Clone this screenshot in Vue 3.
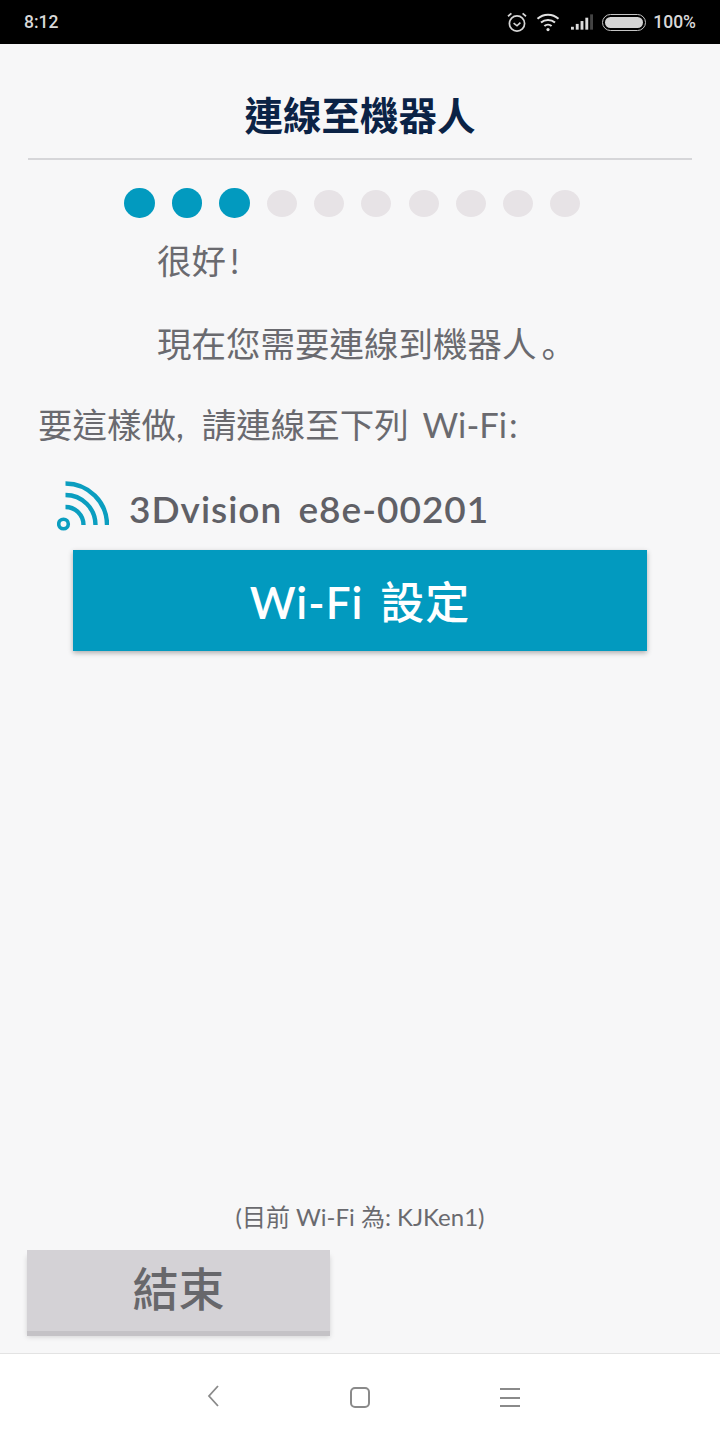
<template>
  <main class="pantalla">

    <!-- STATUS BAR -->
    <header class="estado">
      <span class="estado__hora">8:12</span>
      <div class="estado__iconos">
        <svg class="ic-alarma" viewBox="0 0 22 22" width="22" height="22" fill="none" stroke="#d6d6d6">
          <circle cx="11" cy="12.5" r="7.6" stroke-width="1.7" />
          <path d="M7.6 12.2l3.4 2.6 3.4-3.2" stroke-width="1.6" />
          <path d="M2 5.2l3.4-2.8M20 5.2l-3.4-2.8" stroke-width="1.8" />
        </svg>
        <svg class="ic-wifi" viewBox="0 0 24 20" width="24" height="20" fill="none" stroke="#e2e2e2" stroke-width="2">
          <path d="M1.5 6.8c6-5.4 15-5.4 21 0" />
          <path d="M5 10.6c4-3.6 10-3.6 14 0" />
          <path d="M8.4 14c2-1.8 5.2-1.8 7.2 0" />
          <circle cx="12" cy="17.6" r="1.6" fill="#e2e2e2" stroke="none" />
        </svg>
        <svg class="ic-senal" viewBox="0 0 23 16" width="22" height="16">
          <rect x="0" y="13" width="3" height="3" fill="#dcdcdc" />
          <rect x="5" y="10" width="3" height="6" fill="#dcdcdc" />
          <rect x="10" y="7" width="3" height="9" fill="#dcdcdc" />
          <rect x="15" y="3.5" width="3" height="12.5" fill="#dcdcdc" />
          <rect x="20" y="0" width="3" height="16" fill="#444" />
        </svg>
        <div class="bateria"><div class="bateria__carga"></div></div>
        <span class="estado__pct">100%</span>
      </div>
    </header>

    <!-- CONTEUDO -->
    <section class="conteudo">
      <h1 class="titulo">連線至機器人</h1>
      <div class="linha"></div>

      <div class="pontos">
        <span
          v-for="n in 10"
          :key="n"
          class="ponto"
          :class="{ 'ponto--ativo': n <= 3 }"
        ></span>
      </div>

      <p class="texto texto--recuo primeiro">很好<span class="sinal">!</span></p>
      <p class="texto texto--recuo segundo">現在您需要連線到機器人<span class="ponto-final">。</span></p>
      <p class="texto terceiro">要這樣做<span class="virgula">,</span> 請連線至下列 Wi-Fi<span class="dois-pontos">:</span></p>

      <div class="rede">
        <svg viewBox="0 0 52 52" width="52" height="52" fill="none" stroke="#0b9ec0" stroke-width="4.400">
          <circle cx="6.500" cy="43" r="4.800" stroke-width="3.600" />
          <path d="M8.500 2.500A41.500 41.500 0 0 1 50 44" />
          <path d="M8.500 14A30 30 0 0 1 38.500 44" />
          <path d="M8.500 26A18 18 0 0 1 26.500 44" />
        </svg>
        <span class="rede__nome">3Dvision e8e-00201</span>
      </div>

      <button class="btn btn--wifi" type="button">Wi-Fi <span class="btn__cjk">設定</span></button>

      <p class="atual">(目前 Wi-Fi 為: KJKen1)</p>
      <button class="btn btn--fim" type="button">結束</button>
    </section>

    <!-- NAV -->
    <footer class="nav">
      <svg viewBox="0 0 16 24" width="16" height="24" fill="none" stroke="#8a8a8a" stroke-width="1.800">
        <path d="M13 2L4 12l9 10" />
      </svg>
      <div class="nav__casa"></div>
      <div class="nav__menu"><i></i><i></i><i></i></div>
    </footer>

  </main>
</template>

<script setup>
</script>

<style>
html, body {
  margin: 0;
  background: #f7f7f8;
}
</style>

<style scoped>
.pantalla {
  width: 720px;
  height: 1440px;
  display: flex;
  flex-direction: column;
  background: #f7f7f8;
  font-family: Lato, "Noto Sans CJK TC", sans-serif;
  overflow: hidden;
}

/* STATUS BAR */
.estado {
  height: 44px;
  flex: none;
  background: #000;
  display: flex;
  align-items: center;
  justify-content: space-between;
  padding: 0 24px;
  font-family: Roboto, sans-serif;
  color: #d8d8d8;
  font-size: 17.500px;
  font-weight: 500;
}

.estado__iconos {
  display: flex;
  align-items: center;
}

.ic-wifi {
  margin-left: 8px;
}

.ic-senal {
  margin-left: 11px;
}

.bateria {
  width: 44px;
  height: 17px;
  margin-left: 9px;
  padding: 2px;
  box-sizing: border-box;
  border: 1.500px solid #c4c4c4;
  border-radius: 9px;
}

.bateria__carga {
  height: 100%;
  border-radius: 6px;
  background: #d4d4d4;
}

.estado__pct {
  margin-left: 7px;
}

/* CONTEUDO */
.conteudo {
  flex: 1;
  display: flex;
  flex-direction: column;
  align-items: flex-start;
  padding: 0 28px;
}

.titulo {
  align-self: stretch;
  margin: 48px 0 0;
  text-align: center;
  font-size: 38.500px;
  line-height: 46px;
  font-weight: 700;
  color: #0b2346;
}

.linha {
  align-self: stretch;
  height: 2px;
  margin-top: 20px;
  background: #d6d6d9;
}

.pontos {
  display: flex;
  align-items: center;
  gap: 17.200px;
  margin: 28px 0 0 96px;
  height: 30px;
}

.ponto {
  width: 30px;
  height: 27px;
  border-radius: 50%;
  background: #e7e3e6;
}

.ponto--ativo {
  width: 30.500px;
  height: 30px;
  background: #029abf;
}

.texto {
  margin: 0 0 0 10px;
  font-size: 34.500px;
  line-height: 44px;
  color: #6a6a6f;
  white-space: nowrap;
  word-spacing: 5px;
}

.texto--recuo {
  margin-left: 129px;
}

.primeiro {
  margin-top: 21px;
}

.segundo {
  margin-top: 39px;
}

.terceiro {
  margin-top: 37px;
}

.sinal {
  margin-left: 4px;
}

.dois-pontos {
  margin-left: 2px;
}

.virgula {
  letter-spacing: 4px;
}

.ponto-final {
  font-family: "Noto Sans CJK SC", sans-serif;
  line-height: 0;
  margin-left: 5px;
}

.rede {
  display: flex;
  align-items: center;
  margin: 34px 0 0 29px;
  height: 52px;
}

.rede__nome {
  margin-left: 20px;
  padding-top: 2px;
  font-size: 37px;
  font-weight: 600;
  letter-spacing: 1px;
  word-spacing: 6px;
  color: #606066;
  white-space: nowrap;
}

.btn {
  border: none;
  padding: 0;
  font-family: inherit;
}

.btn--wifi {
  width: 574px;
  height: 101px;
  margin: 17px 0 0 45px;
  padding-bottom: 2px;
  background: #029abf;
  color: #fff;
  font-size: 44px;
  font-weight: 600;
  letter-spacing: 1px;
  word-spacing: 5px;
  box-shadow: 0 2px 5px rgba(0, 0, 0, 0.3);
}

.btn__cjk {
  font-weight: 500;
}

.atual {
  align-self: stretch;
  margin: auto 0 0;
  text-align: center;
  font-size: 24px;
  line-height: 32px;
  color: #6a6a6f;
}

.btn--fim {
  width: 303px;
  height: 81px;
  margin: 17px 0 22px -1px;
  padding-bottom: 9px;
  background: #d4d2d6;
  color: #67676b;
  font-size: 46px;
  font-weight: 500;
  box-shadow: 0 5px 0 #c4c2c6, 0 6px 5px rgba(0, 0, 0, 0.15);
}

/* NAV */
.nav {
  height: 86px;
  flex: none;
  background: #fff;
  border-top: 1px solid #e3e3e3;
  display: flex;
  align-items: center;
  justify-content: center;
  position: relative;
}

.nav svg {
  position: absolute;
  left: 205px;
  top: 30px;
}

.nav__casa {
  width: 16px;
  height: 17px;
  border: 2px solid #8a8a8a;
  border-radius: 5px;
}

.nav__menu {
  position: absolute;
  left: 500px;
  top: 34px;
  width: 20px;
  height: 19px;
  display: flex;
  flex-direction: column;
  justify-content: space-between;
}

.nav__menu i {
  display: block;
  height: 2px;
  background: #8a8a8a;
}
</style>
